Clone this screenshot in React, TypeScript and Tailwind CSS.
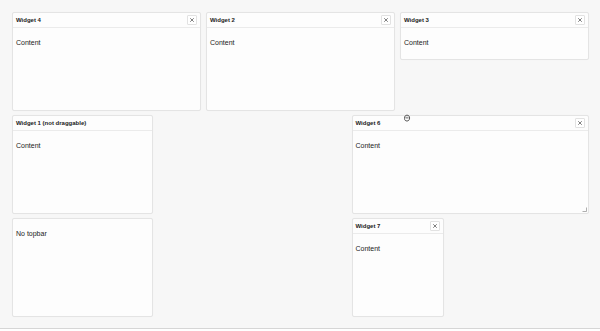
import { X } from "lucide-react";

type Widget = {
  id: string;
  title?: string;
  body: string;
  closable?: boolean;
  resizable?: boolean;
  cls: string;
};

const widgets: Widget[] = [
  { id: "4", title: "Widget 4", body: "Content", closable: true, cls: "col-start-1 col-span-4 row-start-1 row-span-2" },
  { id: "2", title: "Widget 2", body: "Content", closable: true, cls: "col-start-5 col-span-4 row-start-1 row-span-2" },
  { id: "3", title: "Widget 3", body: "Content", closable: true, cls: "col-start-9 col-span-4 row-start-1 row-span-1" },
  { id: "1", title: "Widget 1 (not draggable)", body: "Content", cls: "col-start-1 col-span-3 row-start-3 row-span-2" },
  { id: "6", title: "Widget 6", body: "Content", closable: true, resizable: true, cls: "col-start-8 col-span-5 row-start-3 row-span-2" },
  { id: "5", body: "No topbar", cls: "col-start-1 col-span-3 row-start-5 row-span-2" },
  { id: "7", title: "Widget 7", body: "Content", closable: true, cls: "col-start-8 col-span-2 row-start-5 row-span-2" },
];

const Card = ({ w }: { w: Widget }) => (
  <div className={`${w.cls} relative flex flex-col bg-[#fdfdfd] border border-[#e4e4e4] rounded-[2px] shadow-[0_0_1px_rgba(0,0,0,0.04)]`}>
    {w.title && (
      <div className="h-[15px] flex items-center justify-between px-[3px] border-b border-[#ebebeb]">
        <span className="text-[6px] font-bold text-[#1a1a1a] leading-none">{w.title}</span>
        {w.closable && (
          <button className="w-[10px] h-[10px] flex items-center justify-center border border-[#e2e2e2] rounded-[1px] bg-white text-[#333]">
            <X size={6} strokeWidth={2.5} />
          </button>
        )}
      </div>
    )}
    <div className="px-[3px] pt-[11px] text-[7px] leading-[8px] text-[#222]">{w.body}</div>
    {w.resizable && (
      <svg className="absolute right-[1px] bottom-[1px]" width="5" height="5" viewBox="0 0 5 5">
        <path d="M4.5 0.5 V4.5 H0.5" fill="none" stroke="#9a9a9a" strokeWidth="0.8" />
      </svg>
    )}
  </div>
);

export default function App() {
  return (
    <div className="w-[600px] h-[331px] bg-white overflow-hidden" style={{ fontFamily: '"Liberation Sans", Arial, sans-serif' }}>
      <div className="relative h-[329px] bg-[#f7f7f7] border-b border-[#d6d6d6] p-[12px]">
        <div className="w-[577px] grid grid-cols-12 auto-rows-[47.5px] gap-x-[5px] gap-y-[4px]">
          {widgets.map((w) => (
            <Card key={w.id} w={w} />
          ))}
        </div>
        <svg className="absolute left-[403px] top-[114px]" width="8" height="8" viewBox="0 0 8 8">
          <path d="M1.5 4.5 C1.5 2 2.5 1.2 4 1.2 C5.6 1.2 6.6 2.2 6.6 4 C6.6 6 5.4 7 4 7 C2.6 7 1.5 6.2 1.5 4.5 Z" fill="#fff" stroke="#444" strokeWidth="0.9" />
          <path d="M3 3 V4.6 M4 2.6 V4.6 M5 3 V4.6" stroke="#444" strokeWidth="0.6" />
        </svg>
      </div>
    </div>
  );
}
